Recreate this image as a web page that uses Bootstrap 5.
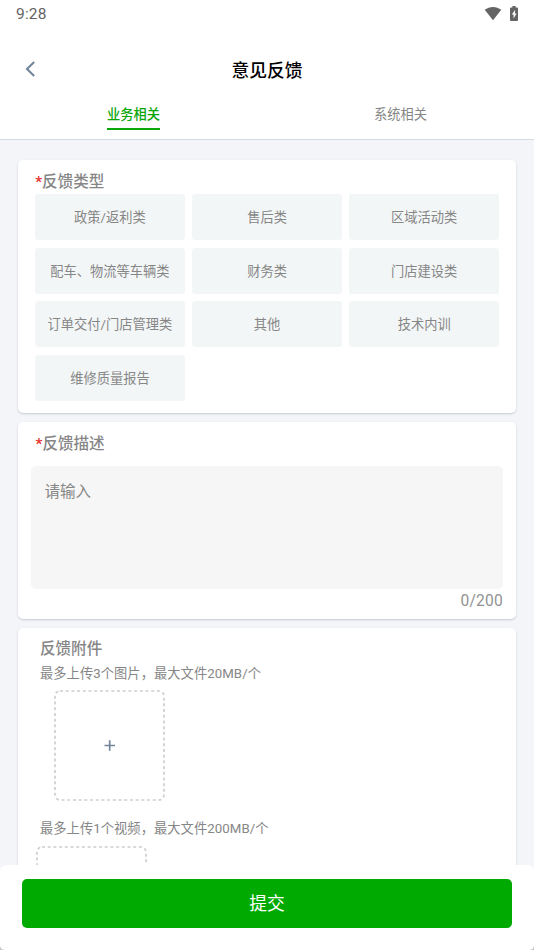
<!DOCTYPE html>
<html lang="zh-CN">
<head>
<meta charset="utf-8">
<meta name="viewport" content="width=device-width, initial-scale=1">
<title>意见反馈</title>
<link href="https://cdn.jsdelivr.net/npm/bootstrap@5.3.0/dist/css/bootstrap.min.css" rel="stylesheet">
<style>
body { font-family: Roboto, "Noto Sans CJK SC", sans-serif; background: #c9cccb; color: #868686; font-size: 13.25px; line-height: 20px; }
.screen { height: 950px; background: #f3f5f9; border-radius: 0 0 5px 5px; }
.top-area { height: 140px; border-bottom: 1px solid #d5dce2; }
.status { height: 28px; padding: 0 16px; color: #646464; font-size: 15.5px; letter-spacing: .2px; }
.status-icons { margin-bottom: 2px; padding-right: .5px; }
.title-bar { height: 66px; padding: 16px 25px 0; display: grid; grid-template-columns: 20px 1fr 20px; }
.title-bar h1 { font-size: 17.8px; font-weight: 500; color: #000; line-height: 24px; padding-top: 3px; }
.tabs .nav-item .nav-link { width: auto; padding: 10px 0 3px; border-radius: 0; color: #868686; line-height: 21px; height: 36px; }
.tabs .nav-item .nav-link.active { color: #0aa60a; font-weight: 500; border-bottom: 2px solid #0aa60a; }
.content { padding: 20px 18px 0; gap: 9px; }
.panel { border: 0; border-radius: 5px; color: inherit; box-shadow: 0 1px 2px rgba(60,65,75,.24); flex-shrink: 0; }
.panel h2 { font-size: 15.55px; font-weight: 500; line-height: 22px; margin: 0; }
.panel h2 span { color: #e5302c; }
.types { height: 253px; padding: 11px 17px 0 17.2px; }
.options { display: grid; grid-template-columns: repeat(3, 1fr); gap: 7.6px; margin-top: 1.3px; }
.options .btn { height: 45.9px; padding: 2px 0 0; border: 0; border-radius: 3px; background: #f3f6f7; color: #868686; font-size: 13.25px; line-height: 20px; }
.describe { height: 197px; padding: 11px 13px 0; }
.describe h2 { padding-left: 4.5px; }
.describe textarea { height: 123px; margin-top: 11px; padding: 15px 13.5px; border: 0; border-radius: 5px; background: #f6f6f6; font-size: 15.55px; line-height: 23px; resize: none; }
.describe textarea::placeholder { color: #868686; }
.counter { font-size: 15.6px; line-height: 24px; color: #929292; letter-spacing: .2px; }
.attach { height: 360px; padding: 10px 17.5px 0; }
.attach h2, .attach p { padding-left: 4.5px; }
.attach p { margin: 4px 0 0; letter-spacing: .06px; }
.upload { width: 111px; height: 111px; }
.upload.first { margin: 6px 0 18px 18.5px; }
.upload.second { margin: 6.5px 0 0 0; }
.bottom-bar { height: 85px; border-radius: 6px 6px 5px 5px; padding: 14px 22px 22px; }
.bottom-bar .btn { height: 49px; border: 0; border-radius: 5px; background: #00aa00; color: #fff; font-size: 17.8px; line-height: 24px; }
</style>
</head>
<body>
<div class="screen d-flex flex-column overflow-hidden">
  <header class="top-area bg-white flex-shrink-0">
    <div class="status d-flex justify-content-between align-items-center">
      <span>9:28</span>
      <span class="status-icons d-flex align-items-start">
        <svg width="18" height="15" viewBox="0 0 18 15"><path d="M.7 3.8C5.5-.1 12.5-.1 17.3 3.8L9 14.2Z" fill="#646464"/></svg>
        <svg class="ms-2" width="8" height="15" viewBox="0 0 8 15"><path d="M2.4 0h3.2v1.5H7q1 0 1 1V14q0 1-1 1H1q-1 0-1-1V2.5q0-1 1-1h1.4Z" fill="#646464"/><path d="M5.2 3.7 1.8 8.6h1.8v4l2.9-5H4.8Z" fill="#fff"/></svg>
      </span>
    </div>
    <div class="title-bar align-items-center">
      <svg width="11" height="16" viewBox="0 0 11 16"><path d="M9.2 1 2 8l7.2 7" fill="none" stroke="#72869b" stroke-width="2.1"/></svg>
      <h1 class="text-center m-0">意见反馈</h1>
    </div>
    <nav class="nav nav-justified tabs">
      <div class="nav-item d-flex justify-content-center"><a class="nav-link active" href="#">业务相关</a></div>
      <div class="nav-item d-flex justify-content-center"><a class="nav-link" href="#">系统相关</a></div>
    </nav>
  </header>
  <main class="content d-flex flex-column flex-grow-1 overflow-hidden">
    <section class="card panel types">
      <h2><span>*</span>反馈类型</h2>
      <div class="options">
        <button class="btn">政策/返利类</button><button class="btn">售后类</button><button class="btn">区域活动类</button>
        <button class="btn">配车、物流等车辆类</button><button class="btn">财务类</button><button class="btn">门店建设类</button>
        <button class="btn">订单交付/门店管理类</button><button class="btn">其他</button><button class="btn">技术内训</button>
        <button class="btn">维修质量报告</button>
      </div>
    </section>
    <section class="card panel describe">
      <h2><span>*</span>反馈描述</h2>
      <textarea class="form-control" placeholder="请输入"></textarea>
      <div class="counter text-end">0/200</div>
    </section>
    <section class="card panel attach">
      <h2>反馈附件</h2>
      <p>最多上传3个图片，最大文件20MB/个</p>
      <svg class="upload first" viewBox="0 0 111 111"><rect x="1" y="1" width="109" height="109" rx="5" fill="none" stroke="#cecece" stroke-width="1.7" stroke-dasharray="3 2.7"/><path d="M50.5 55.5h10.5M55.7 50.2v10.5" stroke="#72869b" stroke-width="1.7"/></svg>
      <p class="mt-0">最多上传1个视频，最大文件200MB/个</p>
      <svg class="upload second" viewBox="0 0 111 111"><rect x="1" y="1" width="109" height="109" rx="5" fill="none" stroke="#cecece" stroke-width="1.7" stroke-dasharray="3 2.7"/></svg>
    </section>
  </main>
  <footer class="bottom-bar bg-white flex-shrink-0"><button class="btn w-100">提交</button></footer>
</div>
<script src="https://cdn.jsdelivr.net/npm/bootstrap@5.3.0/dist/js/bootstrap.bundle.min.js"></script>
</body>
</html>
